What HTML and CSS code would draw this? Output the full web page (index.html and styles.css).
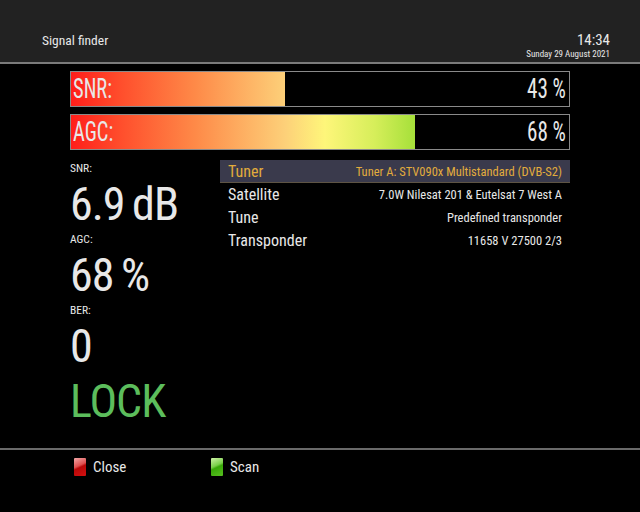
FILE: index.html
```html
<!DOCTYPE html>
<html lang="en">
<head>
  <meta charset="UTF-8">
  <title>Signal finder</title>
  <link rel="stylesheet" href="styles.css">
</head>
<body>
  <div class="screen">
    <div class="header">
      <div class="title">Signal finder</div>
      <div class="clock">
        <div class="time">14:34</div>
        <div class="date">Sunday 29 August 2021</div>
      </div>
    </div>

    <div class="content">
      <div class="bar">
        <div class="fill" style="width: 43%"><div class="grad"></div></div>
        <span class="barLabel">SNR:</span>
        <span class="barValue">43 %</span>
      </div>
      <div class="bar">
        <div class="fill" style="width: 69%"><div class="grad"></div></div>
        <span class="barLabel">AGC:</span>
        <span class="barValue">68 %</span>
      </div>

      <div class="details">
        <div class="readings">
          <div class="small">SNR:</div>
          <div class="big">6.9 dB</div>
          <div class="small">AGC:</div>
          <div class="big">68 %</div>
          <div class="small">BER:</div>
          <div class="big">0</div>
          <div class="big lock">LOCK</div>
        </div>

        <div class="list">
          <div class="row selected"><span class="key">Tuner</span><span class="val">Tuner A: STV090x Multistandard (DVB-S2)</span></div>
          <div class="row"><span class="key">Satellite</span><span class="val">7.0W Nilesat 201 &amp; Eutelsat 7 West A</span></div>
          <div class="row"><span class="key">Tune</span><span class="val">Predefined transponder</span></div>
          <div class="row"><span class="key">Transponder</span><span class="val">11658 V 27500 2/3</span></div>
        </div>
      </div>
    </div>

    <div class="footer">
      <div class="keyBtn"><span class="led red"></span>Close</div>
      <div class="keyBtn"><span class="led green"></span>Scan</div>
    </div>
  </div>
</body>
</html>
```

FILE: styles.css
```css
html, body {
  margin: 0;
  padding: 0;
  background: #000;
}
.screen {
  width: 640px;
  height: 512px;
  display: flex;
  flex-direction: column;
  font-family: "Roboto Condensed", "Roboto", sans-serif;
  font-stretch: 75%;
  color: #e8e8e8;
  overflow: hidden;
}
.header {
  flex-shrink: 0;
  height: 64px;
  background: #222222;
  border-bottom: 2px solid #7a7a7a;
  display: flex;
  justify-content: space-between;
  align-items: flex-start;
  padding: 32px 30px 0 42px;
  box-sizing: border-box;
}
.title {
  font-size: 13.5px;
  line-height: 16px;
}
.clock {
  text-align: right;
}
.time {
  font-size: 15px;
  line-height: 17px;
}
.date {
  font-size: 9px;
  line-height: 11px;
}
.content {
  flex: 1;
  padding: 7px 70px 0 70px;
}
.bar {
  position: relative;
  height: 36px;
  border: 1px solid #8a8a8a;
  box-sizing: border-box;
  margin-bottom: 7px;
  display: flex;
  align-items: center;
  justify-content: space-between;
  padding: 0 3px 0 2px;
  font-size: 27px;
}
.fill {
  position: absolute;
  left: 0;
  top: 0;
  bottom: 0;
  overflow: hidden;
}
.grad {
  width: 498px;
  height: 100%;
  background: linear-gradient(90deg, #ff1e1a 0%, #ff4e2c 10%, #fe8a48 25%, #fdd079 43%, #fef67a 51%, #d6ee5a 61%, #a6e03a 69%, #50c030 100%);
}
.barLabel, .barValue {
  position: relative;
  display: inline-block;
}
.barLabel {
  transform: scaleX(0.76);
  transform-origin: left center;
}
.barValue {
  transform: scaleX(0.78);
  transform-origin: right center;
}
.details {
  display: flex;
}
.readings {
  width: 150px;
  padding-top: 5px;
  white-space: nowrap;
}
.small {
  font-size: 11.5px;
  line-height: 12px;
}
.big {
  font-size: 46px;
  line-height: 46px;
  letter-spacing: -1px;
  word-spacing: -2px;
  margin-top: 7px;
  margin-bottom: 6px;
}
.lock {
  color: #5cbd5c;
  margin-top: 9px;
}
.list {
  flex: 1;
  display: flex;
  flex-direction: column;
  padding-top: 3px;
}
.row {
  display: flex;
  justify-content: space-between;
  align-items: center;
  height: 23px;
  padding: 0 8px;
  box-sizing: border-box;
}
.row.selected {
  background: #3a3a4c;
  border-bottom: 1px solid #5e5444;
  color: #e2ac3c;
}
.key {
  font-size: 16px;
}
.val {
  font-size: 12.5px;
}
.footer {
  flex-shrink: 0;
  height: 64px;
  border-top: 2px solid #6a6a6a;
  display: flex;
  padding: 8px 0 0 74px;
  box-sizing: border-box;
  font-size: 15px;
}
.keyBtn {
  display: flex;
  align-items: center;
  height: 18px;
  width: 137px;
}
.led {
  width: 12px;
  height: 18px;
  margin-right: 7px;
  border-radius: 1px;
}
.led.red {
  background: linear-gradient(155deg, #f2a8a8 0%, #e05050 42%, #b80808 52%, #d41010 100%);
}
.led.green {
  background: linear-gradient(155deg, #d0f2a8 0%, #78d048 42%, #38a808 52%, #58c020 100%);
}
```
